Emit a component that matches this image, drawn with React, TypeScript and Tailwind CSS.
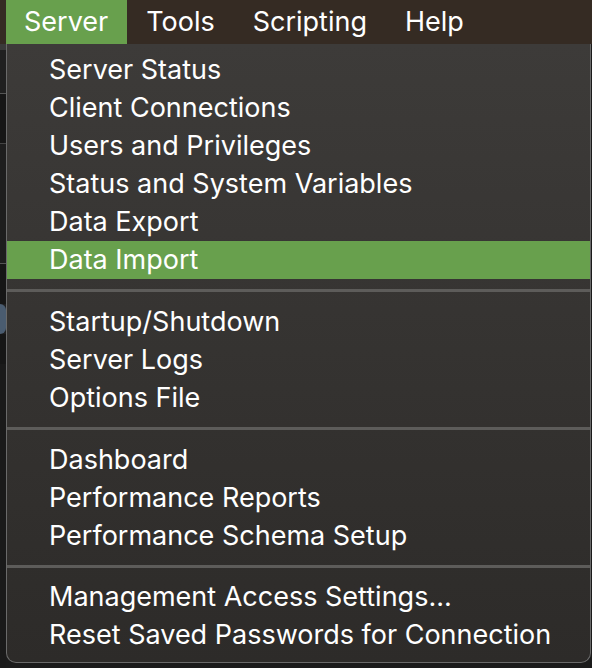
import React from "react";

const groups: string[][] = [
  [
    "Server Status",
    "Client Connections",
    "Users and Privileges",
    "Status and System Variables",
    "Data Export",
    "Data Import",
  ],
  ["Startup/Shutdown", "Server Logs", "Options File"],
  ["Dashboard", "Performance Reports", "Performance Schema Setup"],
  ["Management Access Settings...", "Reset Saved Passwords for Connection"],
];

const menus = ["Server", "Tools", "Scripting", "Help"];

const App: React.FC = () => {
  return (
    <div
      className="w-[592px] h-[668px] overflow-hidden bg-[#1b1b1b] text-white flex flex-col"
      style={{ fontFamily: "Inter, 'Liberation Sans', sans-serif" }}
    >
      {/* menu bar */}
      <div className="h-[44px] shrink-0 bg-[#352b23] flex items-stretch pl-[6px]">
        {menus.map((m, i) => (
          <div
            key={m}
            className={
              i === 0
                ? "flex items-center pl-[18px] pr-[19px] pt-[1px] bg-[#68a04d] text-[27px]"
                : "flex items-center px-[19px] pt-[1px] text-[27px]"
            }
          >
            {m}
          </div>
        ))}
      </div>

      <div className="flex flex-1">
        {/* window behind, left edge */}
        <div className="w-[6px] shrink-0 flex flex-col bg-[#202020]">
          <div className="h-[6px] bg-[#3a3a3a]" />
          <div className="h-[44px] border-b border-[#555]" />
          <div className="h-[50px] bg-[#161616] border-b border-[#444]" />
          <div className="h-[120px] bg-[#1e1e1e] border-b border-[#555]" />
          <div className="h-[40px] bg-[#161616]" />
          <div className="h-[30px] bg-[#4a5c70] rounded-r-full" />
          <div className="h-[30px] bg-[#161616]" />
          <div className="flex-1 bg-[#1a1a1a]" />
        </div>

        {/* dropdown */}
        <div className="w-[585px] h-[619px] shrink-0 rounded-b-[10px] border-x border-b border-[#6a6a6a] bg-gradient-to-b from-[#3d3b39] to-[#2d2b29] pt-[7px] pb-[8px] flex flex-col">
          {groups.map((items, gi) => (
            <React.Fragment key={gi}>
              {gi > 0 && (
                <div className="h-[24px] flex items-center">
                  <div className="h-[3px] w-full bg-[#5d5c5a]" />
                </div>
              )}
              {items.map((label) => (
                <div
                  key={label}
                  className={
                    label === "Data Import"
                      ? "h-[38px] flex items-center pl-[42px] pt-[1px] text-[27px] bg-[#68a04d]"
                      : "h-[38px] flex items-center pl-[42px] pt-[1px] text-[27px]"
                  }
                >
                  {label}
                </div>
              ))}
            </React.Fragment>
          ))}
        </div>
        <div className="flex-1 bg-[#1b1b1b]" />
      </div>
    </div>
  );
};

export default App;
